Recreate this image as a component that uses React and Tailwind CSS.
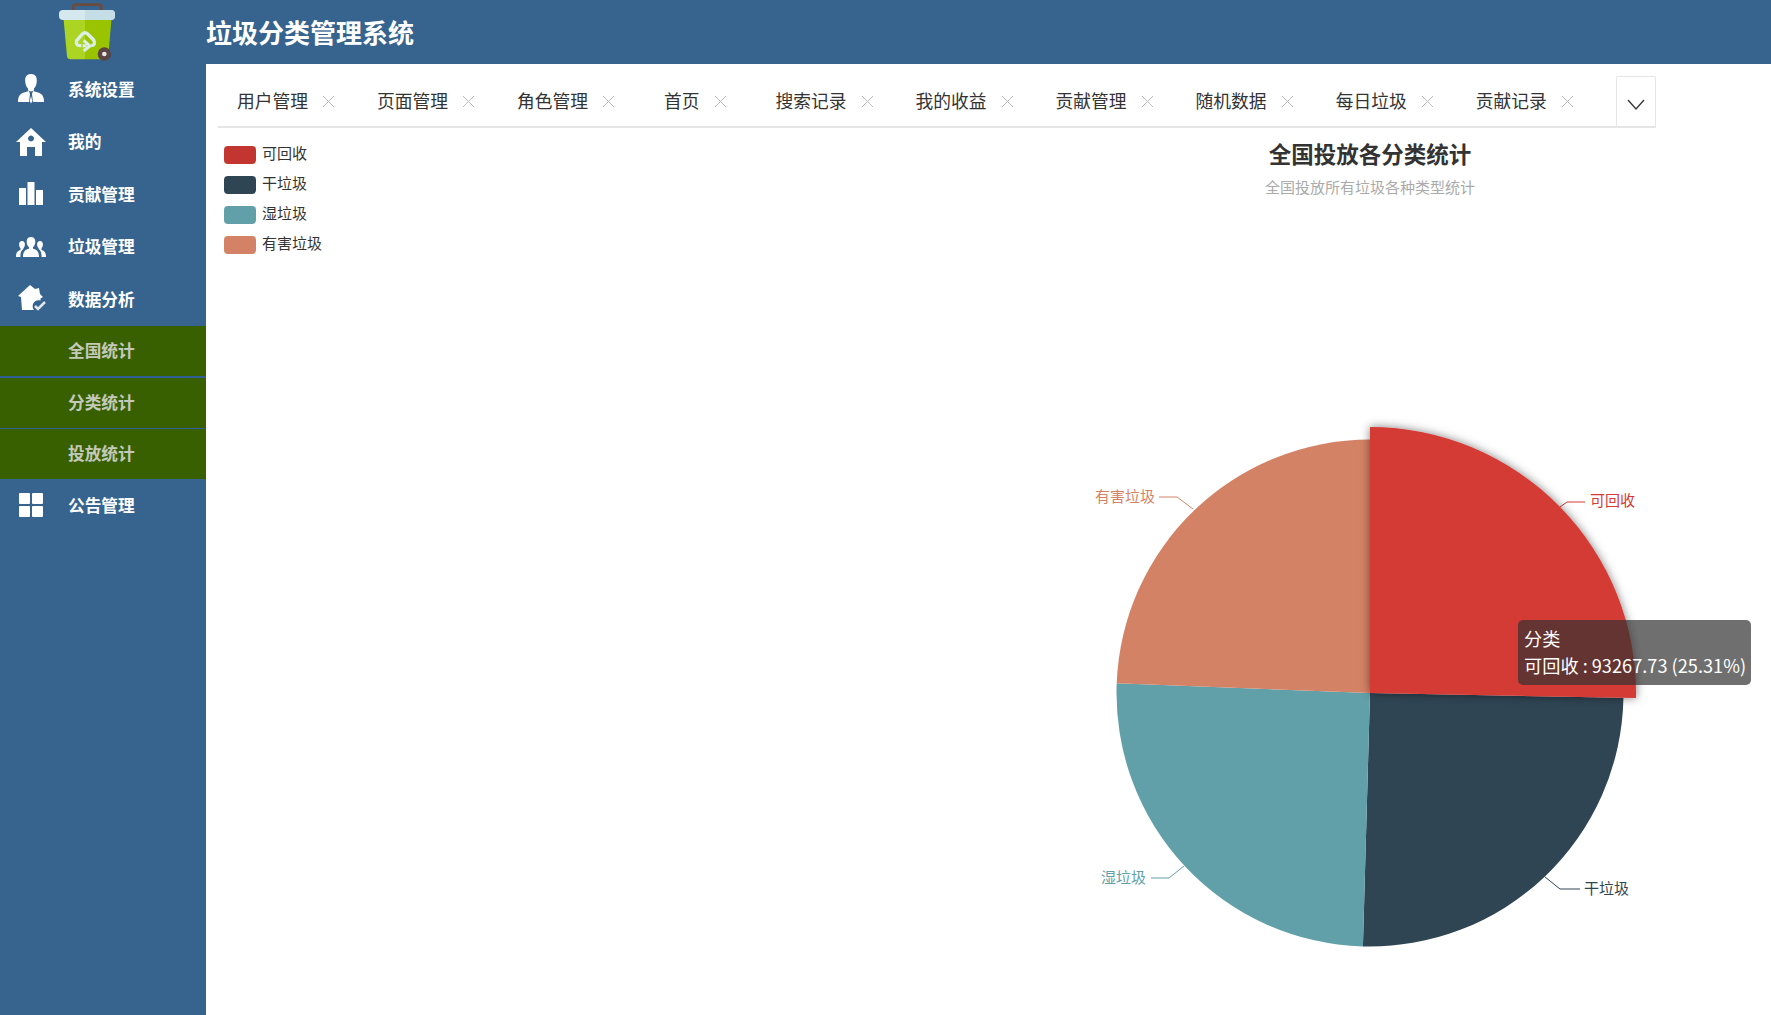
const FONT = "font-['Noto_Sans_CJK_SC','Microsoft_YaHei',sans-serif]";

const TABS = [
  { label: "用户管理" },
  { label: "页面管理" },
  { label: "角色管理" },
  { label: "首页", cls: "ml-[7px] mr-[49px]" },
  { label: "搜索记录" },
  { label: "我的收益" },
  { label: "贡献管理" },
  { label: "随机数据" },
  { label: "每日垃圾" },
  { label: "贡献记录" },
];

const LEGEND = [
  { label: "可回收", color: "bg-[#c23531]" },
  { label: "干垃圾", color: "bg-[#2f4554]" },
  { label: "湿垃圾", color: "bg-[#61a0a8]" },
  { label: "有害垃圾", color: "bg-[#d48265]" },
];

// centre of the pie inside the chart svg
const CX = 300;
const CY = 293;

function sector(start, end, r) {
  const a = ((start - 90) * Math.PI) / 180;
  const b = ((end - 90) * Math.PI) / 180;
  const large = end - start > 180 ? 1 : 0;
  return `M${CX} ${CY}L${CX + r * Math.cos(a)} ${CY + r * Math.sin(a)}A${r} ${r} 0 ${large} 1 ${CX + r * Math.cos(b)} ${CY + r * Math.sin(b)}Z`;
}

function Logo() {
  return (
    <svg viewBox="0 0 225 195" className="w-[75px] h-[65px] ml-[50px] shrink-0">
      <path d="M70 34V22q0-8 8-8h68q8 0 8 8v12" fill="none" stroke="#6b4a3f" strokeWidth="8" />
      <path d="M40 50H105V178H62q-10 0-11-10Z" fill="#abd522" />
      <path d="M105 50H185L175 168q-1 10-11 10H105Z" fill="#9bc400" />
      <rect x="27" y="30" width="168" height="30" rx="12" fill="#d5e8ee" />
      <path d="M105 30H183q12 0 12 15t-12 15H105Z" fill="#c4dde6" />
      <path d="M94 137H90Q76 137 80 122L97 102Q105 94 113 102L131 120Q138 136 124 137" fill="none" stroke="#dcefe6" strokeWidth="10" strokeLinejoin="round" />
      <path d="M98 137H110M101 121L120 138 101 153" fill="none" stroke="#dcefe6" strokeWidth="9" />
      <circle cx="163" cy="162" r="20" fill="#5a4540" />
      <circle cx="163" cy="162" r="7" fill="#e6e6e6" />
    </svg>
  );
}

const ICONS = {
  person: (
    <>
      <path d="M15 0c4.500 0 6 3 5.800 7-.1 3.500-1.300 6-2.800 7.500v2l-3 1-3-1v-2C10.500 13 9.300 10.500 9.200 7 9 3 10.500 0 15 0Z" />
      <path d="M2 28c0-6 2-8 6-9.500l5-1.500 1 3-1 8H2Zm26 0c0-6-2-8-6-9.500l-5-1.500-1 3 1 8h11Z" />
      <path d="M15 22l1.300 5-1.300 2.500-1.300-2.500Z" />
    </>
  ),
  home: (
    <path
      fillRule="evenodd"
      d="M15 1 30 15h-4v14h-7v-9h-8v9H4V15H0ZM15 8.500a3 3 0 1 0 .01 0Z"
    />
  ),
  bars: (
    <>
      <rect x="3" y="9" width="7" height="17" />
      <rect x="11.500" y="3" width="7" height="23" />
      <rect x="20" y="11" width="7" height="15" />
    </>
  ),
  people: (
    <>
      <path d="M15 5c3 0 4.500 2.200 4.300 5-.1 2.500-1 4-2.300 5.200v1.500c3.500 1 6 2.300 6 8.300H7c0-6 2.500-7.300 6-8.300v-1.500C11.700 14 10.800 12.500 10.700 10 10.500 7.200 12 5 15 5Z" />
      <path d="M6 9c2 0 3 1.500 2.900 3.500-.1 1.800-.7 2.800-1.500 3.600v1c-1.500 1-2.900 2.500-3 7.900H0c0-5 1.800-6.200 4.500-7v-1.900C3.700 15.300 3.200 14.300 3.100 12.500 3 10.500 4 9 6 9Z" />
      <path d="M24 9c-2 0-3 1.500-2.900 3.500.1 1.800.7 2.800 1.500 3.600v1c1.500 1 2.900 2.500 3 7.900H30c0-5-1.800-6.200-4.500-7v-1.900c.8-.8 1.300-1.800 1.400-3.600C27 10.500 26 9 24 9Z" />
    </>
  ),
  check: (
    <>
      <path d="M14 1 19 5l4-1 1 6 3 3-2.500 1.500v2c-3-1-6.500.5-7.500 3.500-.7 2-.4 4.500 1 6H6L5 13l-3-1Z" />
      <path d="M19 22l3 3 7-7" fill="none" stroke="#fff" strokeOpacity=".85" strokeWidth="2.500" />
    </>
  ),
  grid: (
    <>
      <rect x="3" y="3" width="11" height="11" rx="1" />
      <rect x="16" y="3" width="11" height="11" rx="1" />
      <rect x="3" y="16" width="11" height="11" rx="1" />
      <rect x="16" y="16" width="11" height="11" rx="1" />
    </>
  ),
};

function MenuItem({ icon, label }) {
  return (
    <div className="flex items-center h-[52.5px] pl-4 text-white text-[16.7px] font-bold">
      <svg viewBox="0 0 30 30" className="w-[30px] h-[30px] fill-white mr-[22px] shrink-0">
        {ICONS[icon]}
      </svg>
      {label}
    </div>
  );
}

function SubItem({ label, cls }) {
  return (
    <div className={`h-[50px] flex items-center pl-[68px] pb-[1px] bg-[#386000] text-[#c3c9bb] text-[16.7px] font-bold ${cls}`}>
      {label}
    </div>
  );
}

function Sidebar() {
  return (
    <aside className="w-[206px] shrink-0 -mt-[1px]">
      <MenuItem icon="person" label="系统设置" />
      <MenuItem icon="home" label="我的" />
      <MenuItem icon="bars" label="贡献管理" />
      <MenuItem icon="people" label="垃圾管理" />
      <MenuItem icon="check" label="数据分析" />
      <div className="bg-[#2f5f96] mt-[0.5px]">
        <SubItem label="全国统计" cls="mb-[2px]" />
        <SubItem label="分类统计" cls="mb-[1px]" />
        <SubItem label="投放统计" />
      </div>
      <MenuItem icon="grid" label="公告管理" />
    </aside>
  );
}

function Tabs() {
  return (
    <div className="mt-3 ml-3 w-[1438px] h-[52px] border-b-2 border-[#e6e6e6] flex pl-[19px] relative">
      {TABS.map(({ label, cls }) => (
        <div key={label} className={`flex items-center h-[50px] pb-[2px] shrink-0 text-[17.75px] text-[#333] ${cls || "mr-[42px]"}`}>
          <span className="whitespace-nowrap">{label}</span>
          <svg viewBox="0 0 13 13" className="w-[13px] h-[13px] ml-[14px] mt-[2px] stroke-[#bbbbbb] fill-none">
            <path d="M1 1l11 11M12 1L1 12" />
          </svg>
        </div>
      ))}
      <div className="absolute right-0 top-0 w-[40px] h-[50px] bg-white border border-b-0 border-[#e6e6e6] rounded-t-[2px] flex items-center justify-center">
        <svg viewBox="0 0 18 11" className="w-[18px] h-[11px] mt-[6px] stroke-[#333] fill-none">
          <path d="M1 1l8 9 8-9" strokeWidth="1.300" />
        </svg>
      </div>
    </div>
  );
}

function Legend() {
  return (
    <div className="pt-3 pl-[18px]">
      {LEGEND.map(({ label, color }) => (
        <div key={label} className="flex items-center h-[30px] text-[15px] text-[#333]">
          <span className={`w-8 h-[18px] rounded-[4px] mr-[6px] ${color}`} />
          <span className="-mt-[3px]">{label}</span>
        </div>
      ))}
    </div>
  );
}

function PieChart() {
  return (
    <svg viewBox="0 0 600 560" className="w-[600px] h-[560px] mt-[203px]">
      <defs>
        <filter id="hover-shadow" x="-20%" y="-20%" width="140%" height="140%">
          <feDropShadow dx="0" dy="0" stdDeviation="5" floodColor="#000" floodOpacity="0.5" />
        </filter>
      </defs>

      <path d={sector(91.1, 181.6, 253.500)} fill="#2f4554" />
      <path d={sector(181.6, 272.2, 253.500)} fill="#61a0a8" />
      <path d={sector(272.2, 360, 253.500)} fill="#d48265" />

      <g fill="none">
        <path d="M490 107l7-5h18" stroke="#d53a35" />
        <path d="M475 477l15 12h20" stroke="#2f4554" />
        <path d="M114 466l-15 12H81" stroke="#61a0a8" />
        <path d="M123 109l-16-12H89" stroke="#d48265" />
      </g>
      <g fontSize="15" dominantBaseline="central">
        <text x="520" y="99" fill="#d53a35">可回收</text>
        <text x="514" y="487" fill="#2f4554">干垃圾</text>
        <text x="31" y="476" fill="#61a0a8">湿垃圾</text>
        <text x="25" y="95" fill="#d48265">有害垃圾</text>
      </g>

      <path d={sector(0, 91.1, 266)} fill="#d53a35" filter="url(#hover-shadow)" />
    </svg>
  );
}

function Chart() {
  return (
    <div className="relative w-[600px] mr-[101px] text-center">
      <h2 className="mt-[11px] text-[22.5px] leading-[28px] font-bold text-[#333]">全国投放各分类统计</h2>
      <p className="mt-[10px] text-[15px] leading-[20px] text-[#aaaaaa]">全国投放所有垃圾各种类型统计</p>
      <PieChart />
      <div className="absolute left-[448px] top-[492px] w-[233px] h-[65px] rounded-[5px] bg-[#323232b3] text-white text-left text-[18.2px] leading-[27px] pl-[6px] pt-[5px] whitespace-nowrap">
        分类
        <br />
        可回收 : 93267.73 (25.31%)
      </div>
    </div>
  );
}

export default function App() {
  return (
    <div className={`h-screen overflow-hidden bg-[#36648f] flex flex-col ${FONT}`}>
      <header className="h-16 shrink-0 flex items-center">
        <div className="w-[206px] h-16 shrink-0">
          <Logo />
        </div>
        <h1 className="text-[26px] font-bold text-white -mt-[2px]">垃圾分类管理系统</h1>
      </header>
      <div className="flex flex-1">
        <Sidebar />
        <main className="flex-1 bg-white flex flex-col">
          <Tabs />
          <div className="flex justify-between">
            <Legend />
            <Chart />
          </div>
        </main>
      </div>
    </div>
  );
}
